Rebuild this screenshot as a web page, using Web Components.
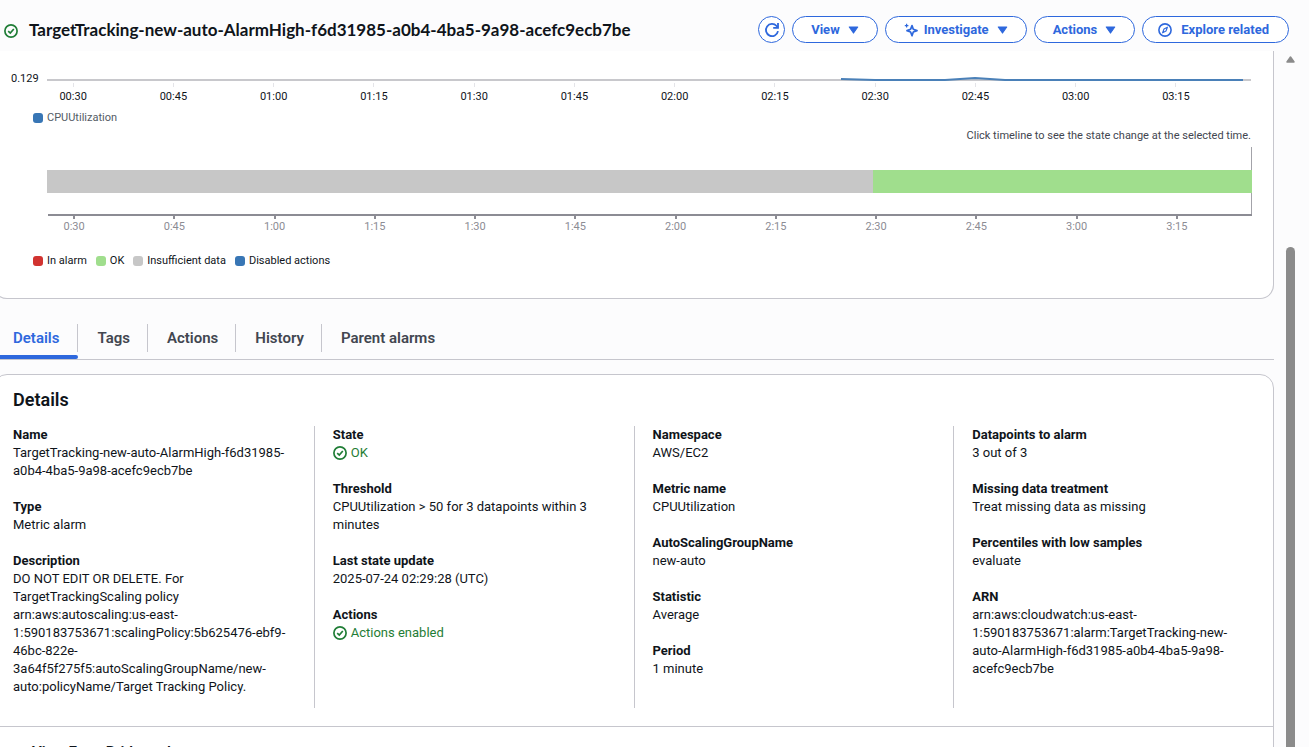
<!DOCTYPE html>
<html lang="en">
<head>
<meta charset="utf-8">
<title>CloudWatch alarm</title>
<style>
  html, body { margin: 0; height: 100%; }
  body {
    background: #fcfcfd; color: #0f141a; overflow: hidden;
    font: 13px/18px Roboto, "Open Sans", sans-serif;
  }
</style>
</head>
<body>
<alarm-page></alarm-page>

<template id="t-page">
  <style>
    :host { display: flex; flex-direction: column; height: 100vh; overflow: hidden; }
    .scroller { flex: 1; min-height: 0; display: flex; }
    main { flex: 1; min-width: 0; overflow: hidden; }
  </style>
  <alarm-header name="TargetTracking-new-auto-AlarmHigh-f6d31985-a0b4-4ba5-9a98-acefc9ecb7be">
    <pill-button icon="refresh" label="Refresh"></pill-button>
    <pill-button menu>View</pill-button>
    <pill-button icon="spark" menu>Investigate</pill-button>
    <pill-button menu>Actions</pill-button>
    <pill-button icon="compass">Explore related</pill-button>
  </alarm-header>
  <div class="scroller">
    <main>
      <alarm-charts></alarm-charts>
      <tab-bar></tab-bar>
      <alarm-details></alarm-details>
    </main>
    <scroll-rail></scroll-rail>
  </div>
</template>

<template id="t-header">
  <style>
    :host { display: flex; align-items: center; gap: 11px; height: 51px; padding: 8px 20px 0 4px; box-sizing: border-box; flex: none; }
    status-icon { padding-top: 3px; }
    h1 { flex: 1; min-width: 0; margin: 0; font: 700 17px/22px Lato, Roboto, sans-serif; white-space: nowrap; }
    .tools { display: flex; gap: 7px; }
  </style>
  <status-icon></status-icon>
  <h1></h1>
  <div class="tools"><slot></slot></div>
</template>

<template id="t-pill">
  <style>
    :host { display: block; flex: none; }
    button {
      display: flex; align-items: center; gap: 6px; height: 27px; box-sizing: border-box;
      padding: 0 18px; border: 1px solid #2e68dd; border-radius: 14px; background: #fff;
      color: #2e68dd; font: 700 13px/18px Roboto, "Open Sans", sans-serif; white-space: nowrap;
    }
    button.round { width: 27px; padding: 0; justify-content: center; }
    button.lead { padding: 0 19px 0 15px; gap: 9px; }
    svg { display: block; flex: none; }
    .caret { margin-left: 2px; }
  </style>
  <button type="button"></button>
</template>

<template id="t-charts">
  <style>
    :host {
      display: block; margin-left: -7px; box-sizing: border-box; height: 248px;
      background: #fff; border: 1px solid #c6c6cd; border-top: 0; border-radius: 0 0 14px 14px;
      padding: 20px 22px 0 17px; font-size: 11px; line-height: 16px;
    }
    .metric { display: grid; grid-template-columns: 36px 1fr; }
    .plot { height: 14px; }
    .plot svg { display: block; width: 100%; height: 14px; }
    .scale { margin: 0 25px 0 -24px; display: grid; grid-template-columns: repeat(12, 1fr); text-align: center; }
    .scale span::before { content: ""; display: block; width: 1px; height: 4px; margin: 0 auto; background: #e4e4e8; }
    .metric .scale { grid-column: 2; margin-top: -4px; color: #0f141a; }
    .metric .scale span::before { margin-bottom: 2px; }
    ul { display: flex; gap: 9px; margin: 0; padding: 0 0 0 22px; list-style: none; }
    li { display: flex; align-items: center; gap: 4px; }
    i { width: 10px; height: 10px; border-radius: 3px; }
    .one { margin-top: 5px; color: #545b64; }
    p { margin: 2px 0 3px; text-align: right; color: #424650; }
    .track { margin: 0 -1px 0 36px; height: 67px; border-right: 1px solid #a3a3a9; display: flex; box-sizing: border-box; padding: 23px 0 21px; }
    .track b:first-child { flex: 825; background: #c7c7c7; }
    .track b:last-child { flex: 379; background: #a0de8d; margin-right: -1px; }
    .time { margin: 0 -1px 0 37px; border-top: 2px solid #8c8c94; color: #8c8c94; }
    .time .scale span::before { width: 2px; height: 3px; background: #8c8c94; }
    .states { margin-top: 18px; }
  </style>
  <section class="metric" aria-label="CPUUtilization chart">
    <span>0.129</span>
    <div class="plot">
      <svg viewBox="0 0 1204 14" preserveAspectRatio="none" aria-hidden="true">
        <path d="M0 9H1204" stroke="#c8c8cc" stroke-width="2"/>
        <path d="M794 8L828 9H898L928 7L958 9H1196" fill="none" stroke="#4a80b8" stroke-width="2"/>
      </svg>
    </div>
    <div class="scale" data-pad="1"></div>
  </section>
  <ul class="one"><li><i style="background:#3876b5"></i>CPUUtilization</li></ul>
  <p>Click timeline to see the state change at the selected time.</p>
  <div class="track"><b></b><b></b></div>
  <div class="time"><div class="scale"></div></div>
  <ul class="states">
    <li><i style="background:#d13330"></i>In alarm</li>
    <li><i style="background:#a0de8d"></i>OK</li>
    <li><i style="background:#c7c7c7"></i>Insufficient data</li>
    <li><i style="background:#3876b5"></i>Disabled actions</li>
  </ul>
</template>

<template id="t-tabs">
  <style>
    :host { display: block; margin: 19px 0 14px; border-bottom: 1px solid #c6c6cd; }
    nav { display: flex; height: 41px; }
    button {
      display: flex; flex-direction: column; padding: 0; border: 0; background: none;
      font: 600 15px/20px Roboto, "Open Sans", sans-serif; color: #424650;
    }
    span { margin-top: 6px; height: 28px; line-height: 28px; padding: 0 17px 0 19px; border-right: 1px solid #c6c6cd; }
    button:first-child span { padding: 0 18px 0 13px; }
    button:last-child span { border: 0; }
    .on { color: #2e68dd; }
    .on::after { content: ""; width: 100%; height: 4px; margin-top: 3px; background: #2e68dd; border-radius: 0 3px 3px 0; }
  </style>
  <nav role="tablist">
    <button class="on" type="button" role="tab" aria-selected="true"><span>Details</span></button>
    <button type="button" role="tab"><span>Tags</span></button>
    <button type="button" role="tab"><span>Actions</span></button>
    <button type="button" role="tab"><span>History</span></button>
    <button type="button" role="tab"><span>Parent alarms</span></button>
  </nav>
</template>

<template id="t-details">
  <style>
    :host { display: block; margin-left: -7px; background: #fff; border: 1px solid #c6c6cd; border-radius: 14px 14px 0 0; }
    h2 { margin: 0; padding: 14px 19px 15px; font-size: 18px; line-height: 22px; font-weight: 600; }
    .cols { display: grid; grid-template-columns: repeat(4, 1fr); min-height: 282px; margin-bottom: 18px; }
    .cols > div { padding: 0 18px; display: flex; flex-direction: column; gap: 18px; border-left: 1px solid #c6c6cd; }
    .cols > div:first-child { border-color: transparent; }
    .more {
      display: block; width: 100%; padding: 15px 19px 16px 38px; border: 0; border-top: 1px solid #c6c6cd; background: none;
      text-align: left; font: 600 15px/20px Roboto, "Open Sans", sans-serif; color: #0f141a;
    }
  </style>
  <h2>Details</h2>
  <div class="cols">
    <div>
      <alarm-field label="Name">TargetTracking-new-auto-AlarmHigh-f6d31985-a0b4-4ba5-9a98-acefc9ecb7be</alarm-field>
      <alarm-field label="Type">Metric alarm</alarm-field>
      <alarm-field label="Description">DO NOT EDIT OR DELETE. For TargetTrackingScaling policy arn:aws:autoscaling:us-east-<wbr>1:590183753671:scalingPolicy:5b625476-ebf9-<wbr>46bc-822e-<wbr>3a64f5f275f5:autoScalingGroupName/new-auto:policyName/Target Tracking Policy.</alarm-field>
    </div>
    <div>
      <alarm-field label="State"><status-icon>OK</status-icon></alarm-field>
      <alarm-field label="Threshold">CPUUtilization &gt; 50 for 3 datapoints within 3 minutes</alarm-field>
      <alarm-field label="Last state update">2025-07-24 02:29:28 (UTC)</alarm-field>
      <alarm-field label="Actions"><status-icon>Actions enabled</status-icon></alarm-field>
    </div>
    <div>
      <alarm-field label="Namespace">AWS/EC2</alarm-field>
      <alarm-field label="Metric name">CPUUtilization</alarm-field>
      <alarm-field label="AutoScalingGroupName">new-auto</alarm-field>
      <alarm-field label="Statistic">Average</alarm-field>
      <alarm-field label="Period">1 minute</alarm-field>
    </div>
    <div>
      <alarm-field label="Datapoints to alarm">3 out of 3</alarm-field>
      <alarm-field label="Missing data treatment">Treat missing data as missing</alarm-field>
      <alarm-field label="Percentiles with low samples">evaluate</alarm-field>
      <alarm-field label="ARN">arn:aws:cloudwatch:us-east-<wbr>1:590183753671:alarm:TargetTracking-new-auto-AlarmHigh-f6d31985-a0b4-4ba5-9a98-acefc9ecb7be</alarm-field>
    </div>
  </div>
  <button class="more" type="button">View EventBridge rule</button>
</template>

<template id="t-field">
  <style>
    :host { display: block; }
    dl, dd { margin: 0; }
    dt { font-weight: 700; }
  </style>
  <dl><dt></dt><dd><slot></slot></dd></dl>
</template>

<template id="t-status">
  <style>
    :host { display: flex; align-items: center; gap: 4px; color: #1f7d36; flex: none; }
    svg { display: block; }
  </style>
  <svg width="14" height="14" viewBox="0 0 14 14" fill="none" stroke="#1f7d36" stroke-width="1.7" aria-hidden="true">
    <circle cx="7" cy="7" r="6.1"/><path d="M4.2 7.1L6.3 9.1L9.8 5"/>
  </svg>
  <slot></slot>
</template>

<template id="t-rail">
  <style>
    :host { display: flex; flex-direction: column; width: 35px; padding-left: 12px; box-sizing: border-box; flex: none; }
    svg { display: block; margin: 5px 0 184px; }
    div { flex: 1; width: 9px; border-radius: 5px 5px 0 0; background: #8b8b8b; }
  </style>
  <svg width="9" height="7" viewBox="0 0 9 7" aria-hidden="true"><path d="M4.5 1L8 6H1Z" fill="#8b8b8b" stroke="#8b8b8b" stroke-width="1.5" stroke-linejoin="round"/></svg>
  <div></div>
</template>

<script>
const ICONS = {
  refresh: '<svg width="16" height="16" viewBox="0 0 16 16" fill="none" stroke="currentColor" stroke-width="1.8" aria-hidden="true"><path d="M14 9.2A6.1 6.1 0 1 1 12.6 4L14 5.6"/><path d="M14 1V5.8H9.2"/></svg>',
  spark: '<svg width="14" height="14" viewBox="0 0 14 14" fill="none" stroke="currentColor" stroke-width="1.7" stroke-linejoin="round" aria-hidden="true"><path d="M8 2.6L9.3 6.2L13 7.6L9.3 9L8 12.8L6.6 9L3 7.6L6.6 6.2Z"/><path d="M2.6 .8V4.4M.8 2.6H4.4" stroke-width="1.2"/></svg>',
  compass: '<svg width="14" height="14" viewBox="0 0 14 14" fill="none" stroke="currentColor" stroke-width="1.6" aria-hidden="true"><circle cx="7" cy="7" r="6.1"/><path d="M9.4 4.2L8 8L4.6 9.8L6 6Z" stroke-width="1.1" stroke-linejoin="round"/></svg>'
};
const CARET = '<svg class="caret" width="11" height="8" viewBox="0 0 11 8" aria-hidden="true"><path d="M1.3 1H9.7L5.5 7Z" fill="currentColor" stroke="currentColor" stroke-width="1.2" stroke-linejoin="round"/></svg>';

function define(name, templateId, setup) {
  customElements.define(name, class extends HTMLElement {
    connectedCallback() {
      if (this.shadowRoot) return;
      const root = this.attachShadow({ mode: 'open' });
      root.append(document.getElementById(templateId).content.cloneNode(true));
      if (setup) setup(this, root);
    }
  });
}

define('status-icon', 't-status');
define('alarm-field', 't-field', (el, root) => {
  root.querySelector('dt').textContent = el.getAttribute('label');
});
define('pill-button', 't-pill', (el, root) => {
  const button = root.querySelector('button');
  const icon = el.getAttribute('icon');
  const label = el.getAttribute('label');
  button.innerHTML = (ICONS[icon] || '') + (label ? '' : '<slot></slot>') + (el.hasAttribute('menu') ? CARET : '');
  if (label) { button.className = 'round'; button.setAttribute('aria-label', label); }
  else if (icon && !el.hasAttribute('menu')) button.className = 'lead';
});
define('alarm-header', 't-header', (el, root) => {
  root.querySelector('h1').textContent = el.getAttribute('name');
});
define('alarm-charts', 't-charts', (el, root) => {
  for (const scale of root.querySelectorAll('.scale')) {
    for (let minutes = 30; minutes <= 195; minutes += 15) {
      const cell = document.createElement('span');
      const hours = String(Math.floor(minutes / 60)).padStart(scale.dataset.pad ? 2 : 1, '0');
      cell.textContent = hours + ':' + String(minutes % 60).padStart(2, '0');
      scale.append(cell);
    }
  }
});
define('tab-bar', 't-tabs');
define('alarm-details', 't-details');
define('scroll-rail', 't-rail');
define('alarm-page', 't-page');
</script>
</body>
</html>
